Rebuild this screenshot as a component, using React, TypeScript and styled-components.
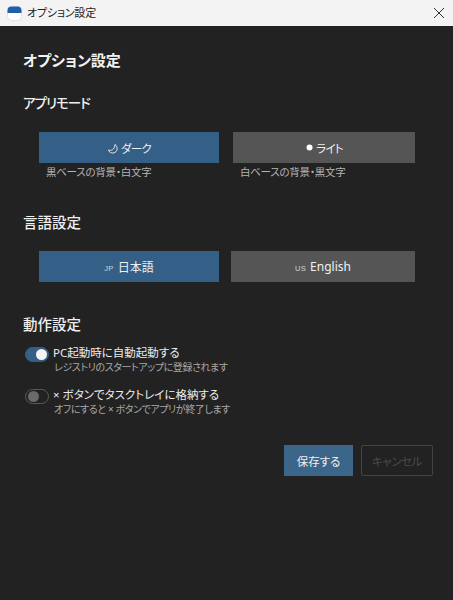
import React, { useState } from 'react';
import styled, { createGlobalStyle } from 'styled-components';

const GlobalStyle = createGlobalStyle`
  html, body {
    margin: 0;
    padding: 0;
    background: #222222;
    font-family: 'Noto Sans', 'Noto Sans CJK JP', sans-serif;
    font-feature-settings: 'palt';
  }
`;

const Window = styled.div`
  width: 453px;
  height: 600px;
  display: flex;
  flex-direction: column;
  overflow: hidden;
  background: #222222;
  color: #f0f0f0;
`;

const TitleBar = styled.div`
  height: 26px;
  flex: none;
  display: flex;
  align-items: center;
  padding: 0 8px 0 7px;
  background: #f3f3f3;
  color: #222222;
  font-size: 11px;
  letter-spacing: -0.2px;
`;

const TitleText = styled.span`
  margin-left: 5px;
  flex: 1;
  line-height: 20px;
`;

const Content = styled.div`
  flex: 1;
  padding: 23px 20px 0 23px;
`;

const PageTitle = styled.h1`
  margin: 0;
  font-size: 15px;
  line-height: 22px;
  font-weight: 700;
  color: #f2f2f2;
`;

const SectionTitle = styled.h2<{ $top: number; $kana?: boolean }>`
  margin: ${(p) => p.$top}px 0 0;
  font-size: ${(p) => (p.$kana ? '13.5px' : '14.5px')};
  letter-spacing: ${(p) => (p.$kana ? '-1px' : '0')};
  line-height: 20px;
  font-weight: 500;
  color: #efefef;
`;

const OptionRow = styled.div<{ $gap: number; $top: number }>`
  display: flex;
  gap: ${(p) => p.$gap}px;
  margin: ${(p) => p.$top}px 0 0 16px;
`;

const OptionColumn = styled.div<{ $width: number }>`
  width: ${(p) => p.$width}px;
`;

const OptionButton = styled.button<{ $active?: boolean; $kana?: boolean }>`
  width: 100%;
  height: 31px;
  display: flex;
  align-items: center;
  justify-content: center;
  gap: ${(p) => (p.$kana ? '2px' : '4px')};
  border: 0;
  padding: 0;
  background: ${(p) => (p.$active ? '#345f86' : '#555555')};
  color: #f0f0f0;
  font: inherit;
  font-size: ${(p) => (p.$kana ? '11.5px' : '12px')};
  letter-spacing: ${(p) => (p.$kana ? '-0.7px' : '0')};
  font-feature-settings: 'palt';
`;

const OptionHint = styled.div`
  margin: 2px 0 0 7px;
  font-size: 10.5px;
  letter-spacing: -0.25px;
  line-height: 15px;
  color: #b4b4b4;
`;

const FlagCode = styled.span`
  font-family: 'Liberation Sans', sans-serif;
  font-size: 7.5px;
  letter-spacing: 0.3px;
  margin-top: 4px;
  color: #d5d5d5;
`;

const ToggleList = styled.div`
  margin-top: 11px;
  display: flex;
  flex-direction: column;
  gap: 12px;
`;

const ToggleRow = styled.div`
  display: flex;
  align-items: flex-start;
  gap: 4px;
  margin-left: 2px;
`;

const Track = styled.div<{ $on: boolean }>`
  width: 24px;
  height: 15px;
  flex: none;
  margin-top: 2px;
  box-sizing: border-box;
  display: flex;
  align-items: center;
  justify-content: ${(p) => (p.$on ? 'flex-end' : 'flex-start')};
  padding: 0 1.5px;
  border-radius: 8px;
  background: ${(p) => (p.$on ? '#345f86' : '#222222')};
  border: 1px solid ${(p) => (p.$on ? '#345f86' : '#5a5a5a')};
`;

const Knob = styled.div<{ $on: boolean }>`
  width: 11px;
  height: 11px;
  border-radius: 50%;
  background: ${(p) => (p.$on ? '#f5f5f5' : '#6a6a6a')};
`;

const ToggleLabel = styled.div`
  font-size: 11.5px;
  line-height: 15px;
  color: #ececec;
`;

const ToggleHint = styled.div`
  margin-left: 1px;
  font-size: 10px;
  letter-spacing: -0.4px;
  line-height: 15px;
  color: #a8a8a8;
`;

const Actions = styled.div`
  margin-top: 28px;
  display: flex;
  justify-content: flex-end;
  gap: 8px;
`;

const SaveButton = styled.button`
  width: 69px;
  height: 31px;
  border: 0;
  padding: 0;
  background: #3b6589;
  color: #f0f0f0;
  font: inherit;
  font-size: 11.5px;
  font-feature-settings: 'palt';
`;

const CancelButton = styled.button`
  width: 72px;
  height: 31px;
  border: 1px solid #444444;
  border-radius: 2px;
  padding: 0;
  background: transparent;
  color: #4a4a4a;
  font: inherit;
  font-size: 11.5px;
  letter-spacing: -0.4px;
  font-feature-settings: 'palt';
`;

const AppIcon = () => (
  <svg width="15" height="15" viewBox="0 0 15 15">
    <rect x="0.5" y="0.5" width="14" height="14" rx="4" fill="#ffffff" stroke="#e2e2e2" />
    <path d="M0.5 7 V4.5 a4 4 0 0 1 4 -4 h6 a4 4 0 0 1 4 4 V7 Z" fill="#1f5fae" />
  </svg>
);

const CloseIcon = () => (
  <svg width="12" height="12" viewBox="0 0 12 12">
    <path d="M1 1 L11 11 M11 1 L1 11" stroke="#333333" strokeWidth="1" fill="none" />
  </svg>
);

const MoonIcon = () => (
  <svg width="12" height="12" viewBox="0 0 12 12">
    <path d="M1.5 8 C4 9 7.5 8 8 2.5 C11 4.5 11 10 6.5 11 C4 11.3 2 10 1.5 8 Z" fill="none" stroke="#e8e8e8" strokeWidth="1" />
  </svg>
);

const SunIcon = () => (
  <svg width="9" height="11" viewBox="0 0 9 11">
    <circle cx="4.5" cy="5.5" r="3" fill="#ffffff" />
  </svg>
);

const Toggle = ({ on, onClick }: { on: boolean; onClick: () => void }) => (
  <Track $on={on} onClick={onClick}>
    <Knob $on={on} />
  </Track>
);

export default function App() {
  const [autoStart, setAutoStart] = useState(true);
  const [toTray, setToTray] = useState(false);

  return (
    <Window>
      <GlobalStyle />
      <TitleBar>
        <AppIcon />
        <TitleText>オプション設定</TitleText>
        <CloseIcon />
      </TitleBar>
      <Content>
        <PageTitle>オプション設定</PageTitle>
        <SectionTitle $top={22} $kana>アプリモード</SectionTitle>
        <OptionRow $gap={14} $top={19}>
          <OptionColumn $width={180}>
            <OptionButton $active $kana>
              <MoonIcon />
              ダーク
            </OptionButton>
            <OptionHint>黒ベースの背景・白文字</OptionHint>
          </OptionColumn>
          <OptionColumn $width={182}>
            <OptionButton $kana>
              <SunIcon />
              ライト
            </OptionButton>
            <OptionHint>白ベースの背景・黒文字</OptionHint>
          </OptionColumn>
        </OptionRow>
        <SectionTitle $top={32}>言語設定</SectionTitle>
        <OptionRow $gap={12} $top={19}>
          <OptionColumn $width={180}>
            <OptionButton $active>
              <FlagCode>JP</FlagCode>
              日本語
            </OptionButton>
          </OptionColumn>
          <OptionColumn $width={184}>
            <OptionButton>
              <FlagCode>US</FlagCode>
              English
            </OptionButton>
          </OptionColumn>
        </OptionRow>
        <SectionTitle $top={32}>動作設定</SectionTitle>
        <ToggleList>
          <ToggleRow>
            <Toggle on={autoStart} onClick={() => setAutoStart(!autoStart)} />
            <div>
              <ToggleLabel>PC起動時に自動起動する</ToggleLabel>
              <ToggleHint>レジストリのスタートアップに登録されます</ToggleHint>
            </div>
          </ToggleRow>
          <ToggleRow>
            <Toggle on={toTray} onClick={() => setToTray(!toTray)} />
            <div>
              <ToggleLabel>× ボタンでタスクトレイに格納する</ToggleLabel>
              <ToggleHint>オフにすると × ボタンでアプリが終了します</ToggleHint>
            </div>
          </ToggleRow>
        </ToggleList>
        <Actions>
          <SaveButton>保存する</SaveButton>
          <CancelButton disabled>キャンセル</CancelButton>
        </Actions>
      </Content>
    </Window>
  );
}
